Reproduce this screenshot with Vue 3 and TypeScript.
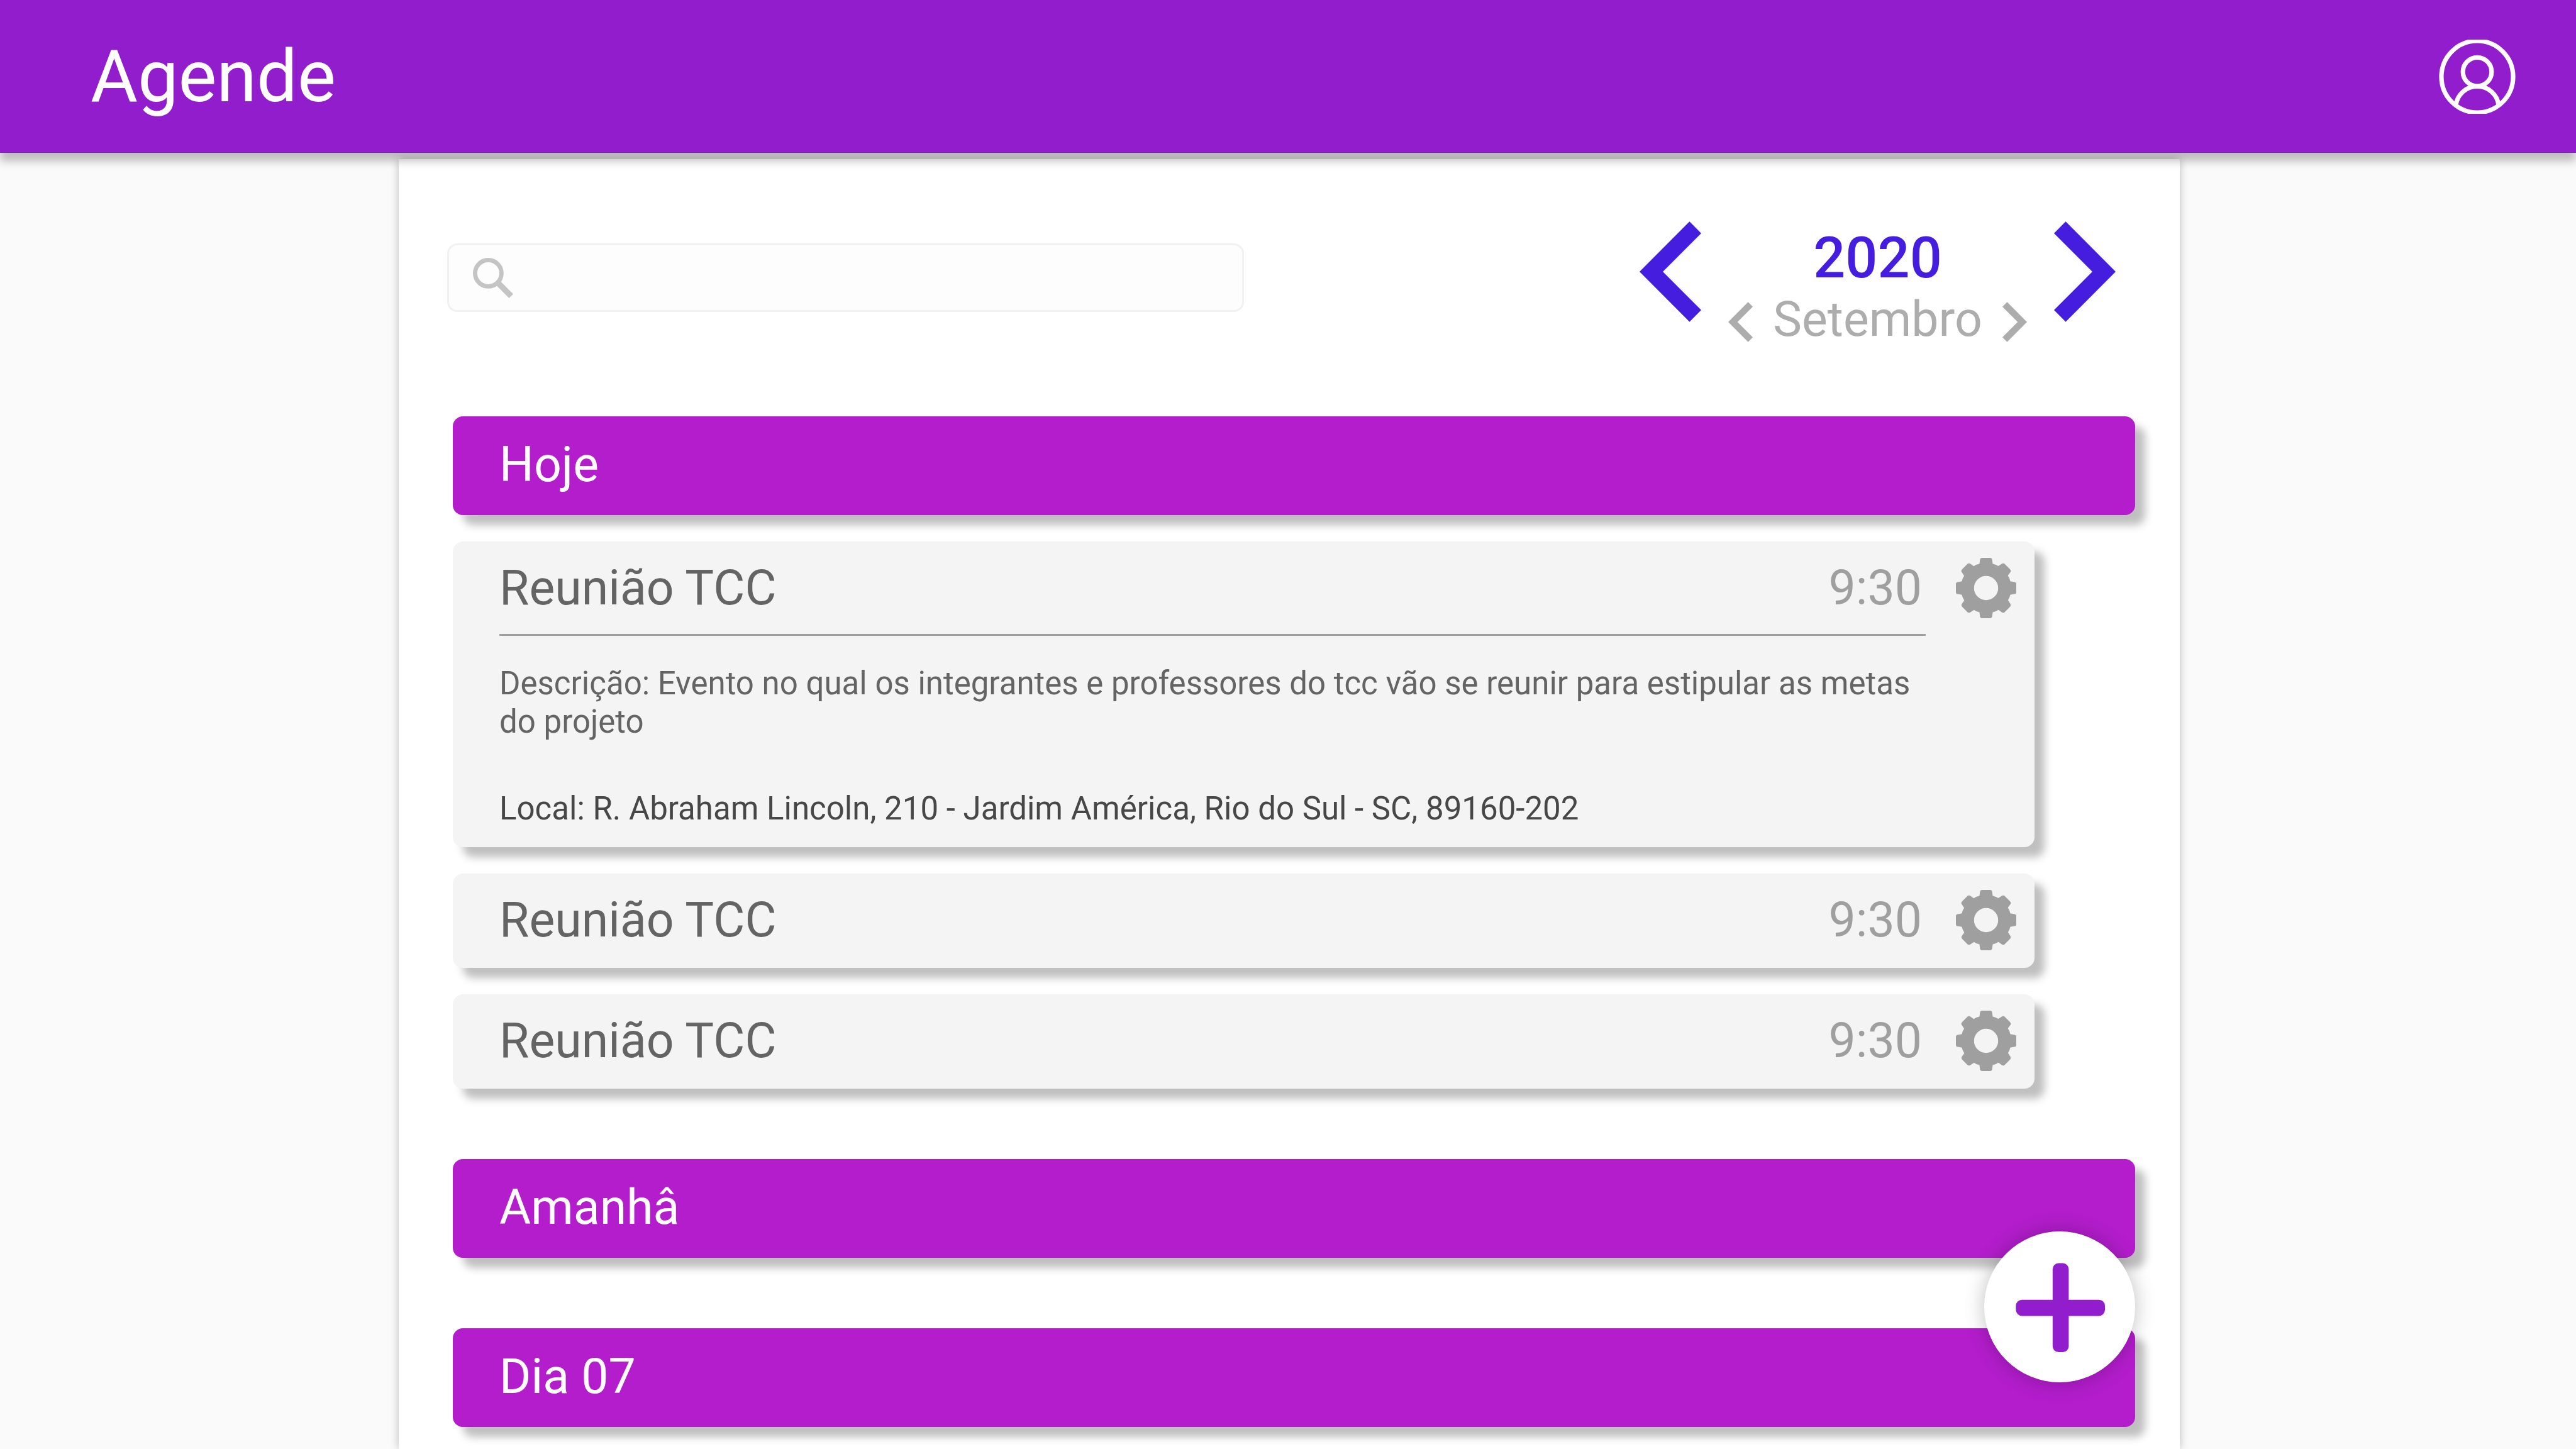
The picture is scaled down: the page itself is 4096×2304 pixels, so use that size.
<script setup lang="ts">
import { computed, ref } from 'vue'

interface AgendaEvent {
  id: number
  title: string
  time: string
  description?: string
  place?: string
}

interface Day {
  label: string
  events: AgendaEvent[]
}

const months = [
  'Janeiro', 'Fevereiro', 'Março', 'Abril', 'Maio', 'Junho',
  'Julho', 'Agosto', 'Setembro', 'Outubro', 'Novembro', 'Dezembro',
]

const query = ref('')
const year = ref(2020)
const month = ref(8)
const monthName = computed(() => months[month.value])

function moveMonth(step: number) {
  const next = month.value + step
  year.value += Math.floor(next / 12)
  month.value = (next + 12) % 12
}

const days: Day[] = [
  {
    label: 'Hoje',
    events: [
      {
        id: 1,
        title: 'Reunião TCC',
        time: '9:30',
        description:
          'Evento no qual os integrantes e professores do tcc vão se reunir para estipular as metas do projeto',
        place: 'R. Abraham Lincoln, 210 - Jardim América, Rio do Sul - SC, 89160-202',
      },
      { id: 2, title: 'Reunião TCC', time: '9:30' },
      { id: 3, title: 'Reunião TCC', time: '9:30' },
    ],
  },
  { label: 'Amanhâ', events: [] },
  { label: 'Dia 07', events: [] },
]

const quarterTurns = [0, 90, 180, 270]
</script>

<template>
  <div class="page">
    <header class="topbar">
      <h1 class="brand">Agende</h1>
      <button class="profile" type="button" aria-label="Perfil">
        <svg viewBox="0 0 152 148" fill="none" stroke="#fff" stroke-width="9">
          <circle cx="76" cy="74" r="71.5" />
          <circle cx="76" cy="64.2" r="28.6" />
          <path d="M33.3 131A43 43 0 0 1 118.7 131" />
        </svg>
      </button>
    </header>

    <main class="sheet">
      <div class="toolbar">
        <label class="search">
          <svg class="search-icon" viewBox="0 0 80 80" aria-hidden="true">
            <circle cx="30.5" cy="30.5" r="26.2" fill="none" stroke="#c4c4c4" stroke-width="8.6" />
            <path d="M52 43.8L80 71.8L71.8 80L43.8 52Z" fill="#c4c4c4" />
          </svg>
          <input v-model="query" type="search" aria-label="Pesquisar eventos" />
        </label>

        <nav class="dates" aria-label="Período">
          <button class="year-step" type="button" aria-label="Ano anterior" @click="year--">
            <svg viewBox="0 0 123 200"><path d="M99.7 0L123 23.3L46.5 100L123 176.7L99.7 200L0 100Z" /></svg>
          </button>
          <div class="period">
            <strong class="year">{{ year }}</strong>
            <div class="month-row">
              <button class="month-step" type="button" aria-label="Mês anterior" @click="moveMonth(-1)">
                <svg viewBox="0 0 123 200"><path d="M99.7 0L123 23.3L46.5 100L123 176.7L99.7 200L0 100Z" /></svg>
              </button>
              <span class="month">{{ monthName }}</span>
              <button class="month-step" type="button" aria-label="Próximo mês" @click="moveMonth(1)">
                <svg viewBox="0 0 123 200"><path d="M23.3 0L0 23.3L76.5 100L0 176.7L23.3 200L123 100Z" /></svg>
              </button>
            </div>
          </div>
          <button class="year-step" type="button" aria-label="Próximo ano" @click="year++">
            <svg viewBox="0 0 123 200"><path d="M23.3 0L0 23.3L76.5 100L0 176.7L23.3 200L123 100Z" /></svg>
          </button>
        </nav>
      </div>

      <div class="days">
        <section v-for="day in days" :key="day.label" class="day">
          <h2 class="day-title">{{ day.label }}</h2>
          <article v-for="event in day.events" :key="event.id" class="event">
            <div class="event-head">
              <h3 class="event-title">{{ event.title }}</h3>
              <time class="event-time">{{ event.time }}</time>
              <button class="settings" type="button" aria-label="Configurar evento">
                <svg viewBox="0 0 120 120" fill="#9f9f9f">
                  <circle cx="60" cy="60" r="37" fill="none" stroke="#9f9f9f" stroke-width="26" />
                  <g v-for="turn in quarterTurns" :key="turn" :transform="`rotate(${turn} 60 60)`">
                    <path d="M46.7 12.5L48 3.4Q48.6 0 52 0H68Q71.4 0 72 3.4L73.3 12.5V18H46.7Z" />
                    <path d="M35.3 16.7L28.4 11.7Q25.7 9.8 23.2 12L12 23.2Q9.8 25.7 11.6 28.4L16.3 35.7L30 42L42 30Z" />
                  </g>
                </svg>
              </button>
            </div>
            <div v-if="event.description" class="event-body">
              <p class="description">Descrição: {{ event.description }}</p>
              <p class="place">Local: {{ event.place }}</p>
            </div>
          </article>
        </section>
      </div>
    </main>

    <button class="add" type="button" aria-label="Adicionar evento">
      <svg viewBox="0 0 300 300" fill="#911dcc">
        <rect x="63" y="136" width="177" height="32" rx="12" />
        <rect x="136" y="63" width="32" height="177" rx="12" />
      </svg>
    </button>
  </div>
</template>

<style>
body {
  margin: 0;
  background: #fafafa;
}
</style>

<style scoped>
.page {
  min-height: 100vh;
  display: flex;
  flex-direction: column;
  font-family: Roboto, "Liberation Sans", sans-serif;
  font-weight: 400;
}

h1,
h2,
h3,
p {
  margin: 0;
  font-weight: 400;
}

button {
  flex: none;
  padding: 0;
  border: 0;
  background: none;
  cursor: pointer;
}

svg {
  display: block;
  width: 100%;
  height: 100%;
}

.topbar {
  position: relative;
  z-index: 1;
  display: flex;
  align-items: center;
  justify-content: space-between;
  height: 243px;
  padding: 0 96px 0 144px;
  box-sizing: border-box;
  background: #911dcc;
  box-shadow: 0 13px 13px rgba(0, 0, 0, 0.25);
}

.brand {
  font-size: 115px;
  line-height: 136px;
  color: #fff;
}

.profile {
  width: 122px;
  height: 118px;
}

.sheet {
  flex: 1;
  margin: 10px 630px 0 634px;
  padding: 99px 0 35px;
  background: #fff;
  box-shadow: 0 0 13px rgba(0, 0, 0, 0.25);
}

.toolbar {
  display: flex;
  align-items: flex-start;
  justify-content: space-between;
  padding: 0 102px 0 77px;
}

.search {
  display: flex;
  align-items: center;
  gap: 24px;
  width: 1267px;
  height: 109px;
  margin-top: 35px;
  padding: 0 38px;
  box-sizing: border-box;
  border: 3px solid #f1f1f1;
  border-radius: 16px;
  background: #fdfdfd;
}

.search-icon {
  flex: none;
  width: 64px;
  height: 64px;
}

.search input {
  flex: 1;
  min-width: 0;
  padding: 0;
  border: 0;
  outline: 0;
  background: none;
  font: inherit;
  font-size: 51px;
  color: #646464;
}

.dates {
  display: flex;
  align-items: flex-start;
}

.year-step {
  width: 98px;
  height: 160px;
  fill: #451dde;
}

.period {
  display: flex;
  flex-direction: column;
  gap: 2px;
  width: 561px;
}

.year {
  font-size: 90px;
  font-weight: 500;
  line-height: 118px;
  text-align: center;
  color: #451dde;
}

.month-row {
  display: flex;
  align-items: flex-end;
  justify-content: space-between;
  padding: 0 43px;
}

.month-step {
  width: 39px;
  height: 64px;
  fill: #adadad;
}

.month {
  font-size: 77px;
  line-height: 72px;
  color: #adadad;
}

.days {
  display: flex;
  flex-direction: column;
  gap: 112px;
  margin-top: 118px;
  padding: 0 71px 0 86px;
}

.day {
  display: flex;
  flex-direction: column;
  gap: 42px;
}

.day-title {
  padding: 0 74px 3px;
  border-radius: 16px;
  background: #b31dcc;
  box-shadow: 16px 16px 13px rgba(0, 0, 0, 0.25);
  font-size: 77px;
  line-height: 154px;
  color: #fff;
}

.event {
  margin-right: 160px;
  padding-bottom: 3px;
  border-radius: 16px;
  background: #f4f4f4;
  box-shadow: 16px 16px 13px rgba(0, 0, 0, 0.25);
}

.event-head {
  display: flex;
  align-items: center;
  height: 147px;
  padding: 0 29px 0 74px;
}

.event-title {
  flex: 1;
  font-size: 77px;
  line-height: 90px;
  color: #646464;
}

.event-time {
  margin-right: 54px;
  font-size: 77px;
  line-height: 90px;
  color: #9f9f9f;
}

.settings {
  width: 96px;
  height: 96px;
}

.event-body {
  margin: 0 173px 0 74px;
  padding: 45px 0 28px;
  border-top: 3px solid #9f9f9f;
  font-size: 51px;
  line-height: 61px;
}

.description {
  color: #646464;
}

.place {
  margin-top: 77px;
  color: #474747;
}

.add {
  position: fixed;
  right: 701px;
  bottom: 106px;
  z-index: 2;
  width: 240px;
  height: 240px;
  border-radius: 50%;
  background: #fff;
  box-shadow: 0 0 32px rgba(0, 0, 0, 0.25);
}
</style>
